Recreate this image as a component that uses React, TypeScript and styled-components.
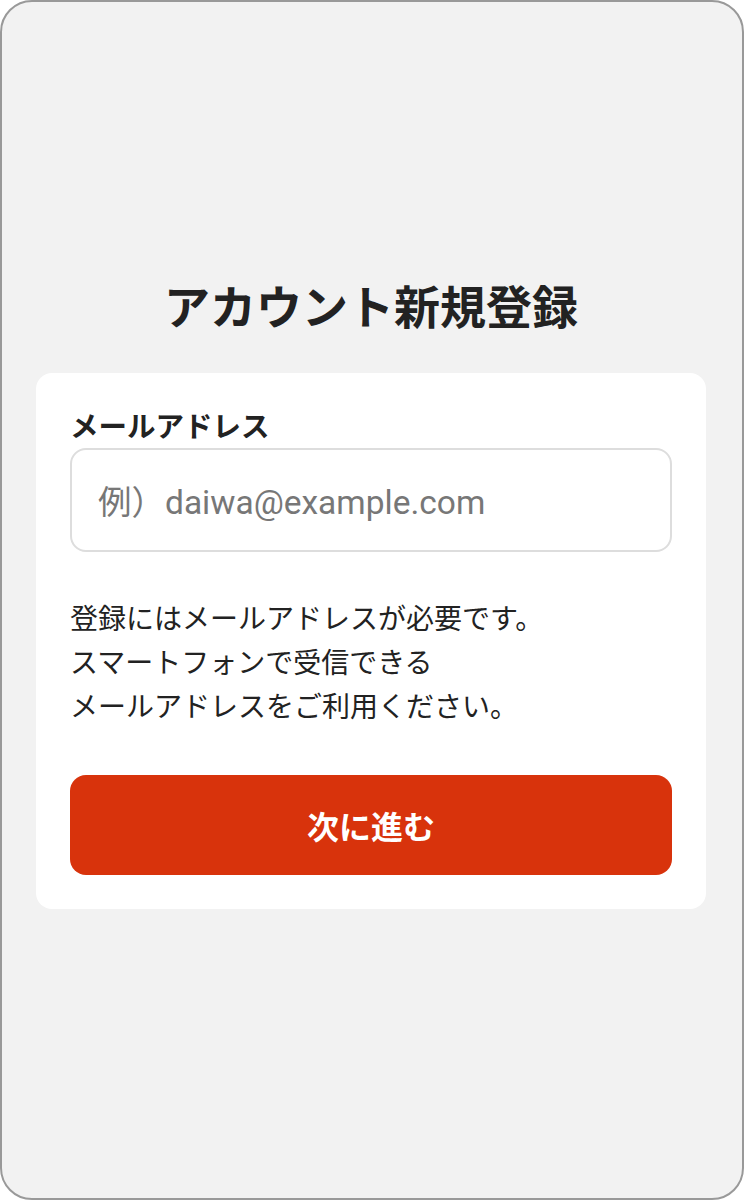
import React from 'react'
import styled, { createGlobalStyle } from 'styled-components'

const GlobalStyle = createGlobalStyle`
  html, body {
    margin: 0;
    padding: 0;
    background: #ffffff;
  }
  body {
    font-family: Roboto, "Noto Sans CJK JP", sans-serif;
    color: #222222;
  }
`

const Frame = styled.div`
  box-sizing: border-box;
  width: 744px;
  height: 1200px;
  border: 2px solid #999999;
  border-radius: 32px;
  background: #f2f2f2;
  display: flex;
  flex-direction: column;
  justify-content: center;
  padding: 0 36px 22px 34px;
`

const Title = styled.h1`
  margin: 0 0 34px;
  font-size: 46px;
  line-height: 69px;
  font-weight: 700;
  text-align: center;
  color: #222222;
  font-family: "Noto Sans CJK JP", sans-serif;
`

const Card = styled.div`
  background: #ffffff;
  border-radius: 16px;
  padding: 32px 34px 34px;
  display: flex;
  flex-direction: column;
`

const Label = styled.label`
  font-family: "Noto Sans CJK JP", sans-serif;
  font-size: 28.5px;
  line-height: 40px;
  font-weight: 700;
  margin-bottom: 3px;
`

const Input = styled.input`
  box-sizing: border-box;
  width: 100%;
  height: 104px;
  border: 2px solid #dddddd;
  border-radius: 16px;
  padding: 5px 26px 0;
  font-family: Roboto, "Noto Sans CJK JP", sans-serif;
  font-size: 33.5px;
  color: #222222;
  outline: none;
  &::placeholder {
    color: #777777;
  }
`

const Note = styled.p`
  margin: 43px 0 48px;
  font-family: "Noto Sans CJK JP", sans-serif;
  font-size: 28px;
  line-height: 44px;
  color: #222222;
`

const Button = styled.button`
  height: 100px;
  border: 0;
  border-radius: 16px;
  background: #d8330c;
  color: #ffffff;
  font-family: "Noto Sans CJK JP", sans-serif;
  font-size: 32px;
  font-weight: 700;
  cursor: pointer;
`

const App: React.FC = () => {
  return (
    <>
      <GlobalStyle />
      <Frame>
        <Title>アカウント新規登録</Title>
        <Card>
          <Label htmlFor="email">メールアドレス</Label>
          <Input id="email" type="email" placeholder="例）daiwa@example.com" />
          <Note>
            登録にはメールアドレスが必要です。
            <br />
            スマートフォンで受信できる
            <br />
            メールアドレスをご利用ください。
          </Note>
          <Button type="button">次に進む</Button>
        </Card>
      </Frame>
    </>
  )
}

export default App
